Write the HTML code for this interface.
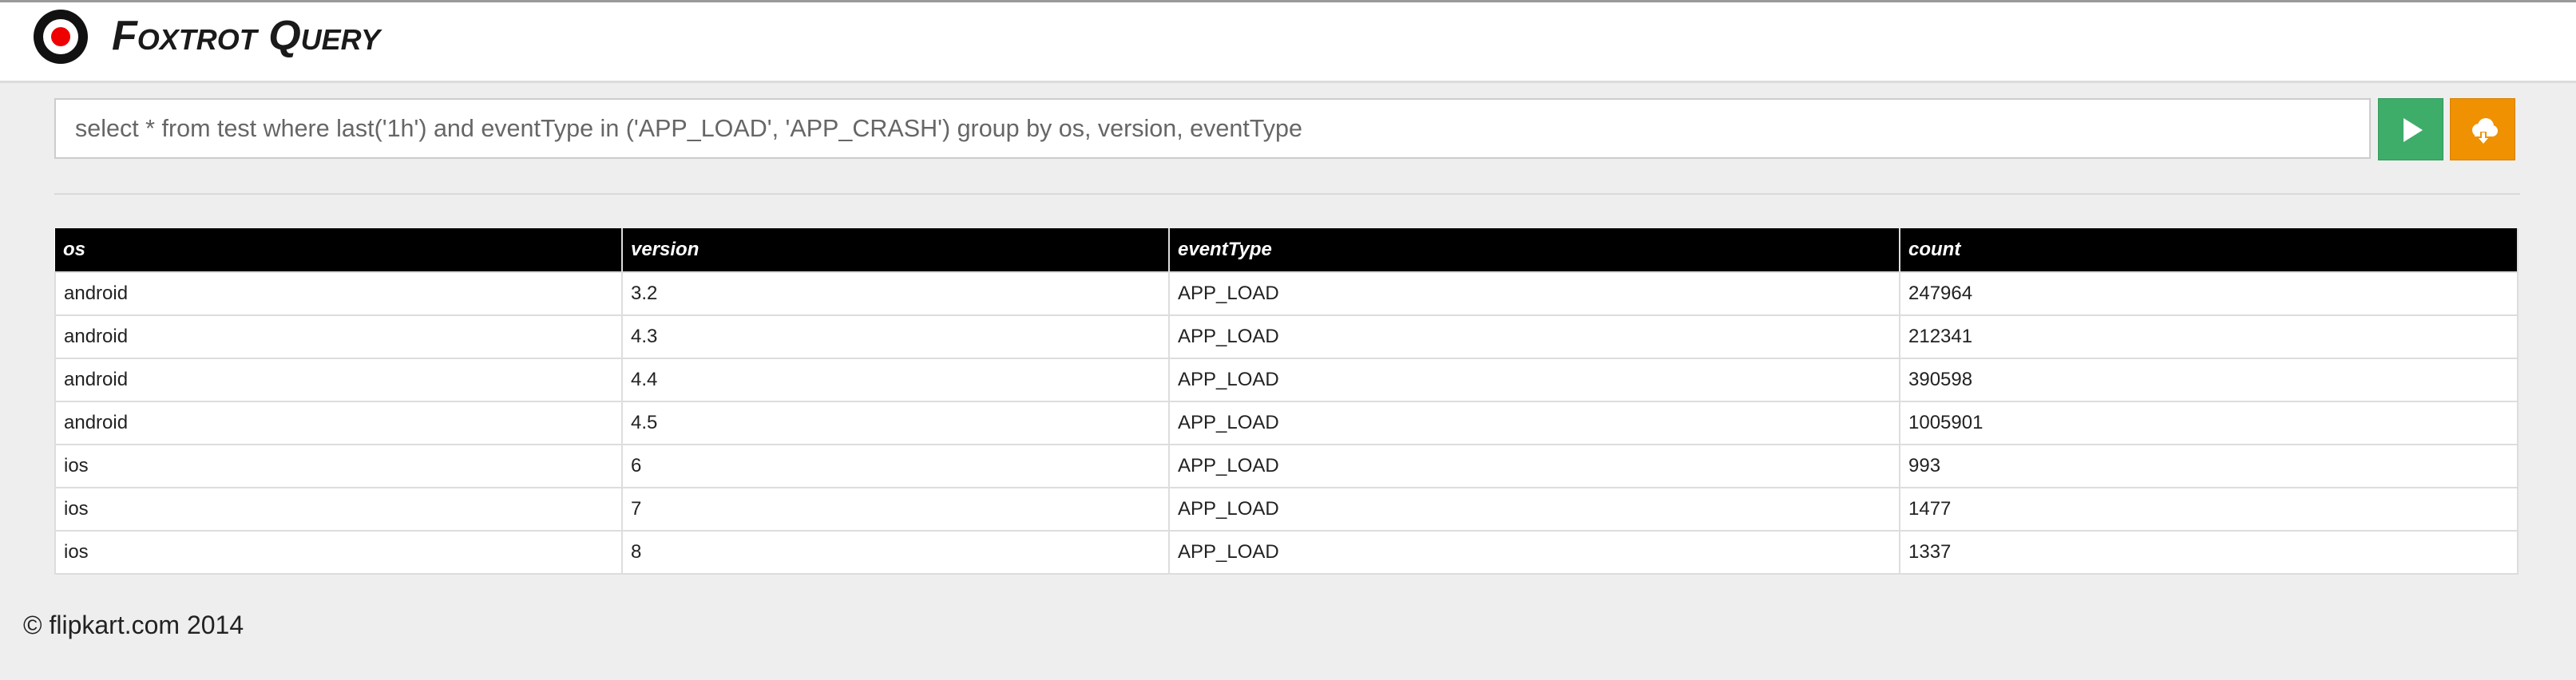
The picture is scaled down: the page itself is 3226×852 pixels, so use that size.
<!DOCTYPE html>
<html><head><style>
*{margin:0;padding:0;box-sizing:border-box}
body{width:3226px;height:852px;background:#eeeeee;font-family:"Liberation Sans",sans-serif;position:relative;overflow:hidden}
.hdr{position:absolute;left:0;top:0;width:3226px;height:104px;background:#fff;border-top:3px solid #9a9a9a;border-bottom:3px solid #dcdcdc}
.logo{position:absolute;left:42px;top:9px;width:68px;height:68px;border-radius:50%;background:#111}
.logo:before{content:"";position:absolute;left:12px;top:12px;width:44px;height:44px;border-radius:50%;background:#fff}
.logo:after{content:"";position:absolute;left:22px;top:22px;width:24px;height:24px;border-radius:50%;background:#ee0000}
.title{position:absolute;left:140px;top:12px;font-size:52px;font-weight:bold;font-style:italic;font-variant:small-caps;color:#1a1a1a;letter-spacing:0}
.q{position:absolute;left:68px;top:123px;width:2901px;height:76px;background:#fff;border:2px solid #ccc;font-size:30.5px;color:#666;padding-left:24px;line-height:72px}
.b{position:absolute;top:123px;width:82px;height:78px}
.g{left:2978px;background:#3fad6a;border:1px solid #2f9a5a}
.o{left:3068px;background:#ef9100;border:1px solid #d88000}
.hr{position:absolute;left:68px;top:242px;width:3088px;height:2px;background:#dadada}
table{position:absolute;left:68px;top:286px;width:3086px;border-collapse:collapse;font-size:24px;background:#fff}
th{background:#000;color:#fff;font-style:italic;font-weight:bold;text-align:left;height:55px;padding-left:10px;border-right:2px solid #ddd}
td{height:54px;padding-left:10px;border:2px solid #ddd;color:#222}
.f{position:absolute;left:29px;top:765px;font-size:32px;color:#222}
</style></head><body>
<div class="hdr"><div class="logo"></div><div class="title">Foxtrot Query</div></div>
<div class="q">select * from test where last('1h') and eventType in ('APP_LOAD', 'APP_CRASH') group by os, version, eventType</div>
<div class="b g"><svg width="82" height="78"><polygon points="31,24 55,39 31,54" fill="#fff"/></svg></div>
<div class="b o"><svg width="82" height="78"><g fill="#fff"><circle cx="35" cy="39" r="8"/><circle cx="44" cy="34" r="10"/><circle cx="52" cy="40" r="7"/><rect x="30" y="38" width="24" height="9"/></g><rect x="37" y="41" width="8" height="8" fill="#ef9100"/><rect x="39" y="42" width="4" height="8" fill="#fff"/><polygon points="35,49 47,49 41,56" fill="#fff"/></svg></div>
<div class="hr"></div>
<table>
<tr><th style="width:710px">os</th><th style="width:685px">version</th><th style="width:915px">eventType</th><th>count</th></tr>
<tr><td>android</td><td>3.2</td><td>APP_LOAD</td><td>247964</td></tr>
<tr><td>android</td><td>4.3</td><td>APP_LOAD</td><td>212341</td></tr>
<tr><td>android</td><td>4.4</td><td>APP_LOAD</td><td>390598</td></tr>
<tr><td>android</td><td>4.5</td><td>APP_LOAD</td><td>1005901</td></tr>
<tr><td>ios</td><td>6</td><td>APP_LOAD</td><td>993</td></tr>
<tr><td>ios</td><td>7</td><td>APP_LOAD</td><td>1477</td></tr>
<tr><td>ios</td><td>8</td><td>APP_LOAD</td><td>1337</td></tr>
</table>
<div class="f">© flipkart.com 2014</div>
</body></html>
